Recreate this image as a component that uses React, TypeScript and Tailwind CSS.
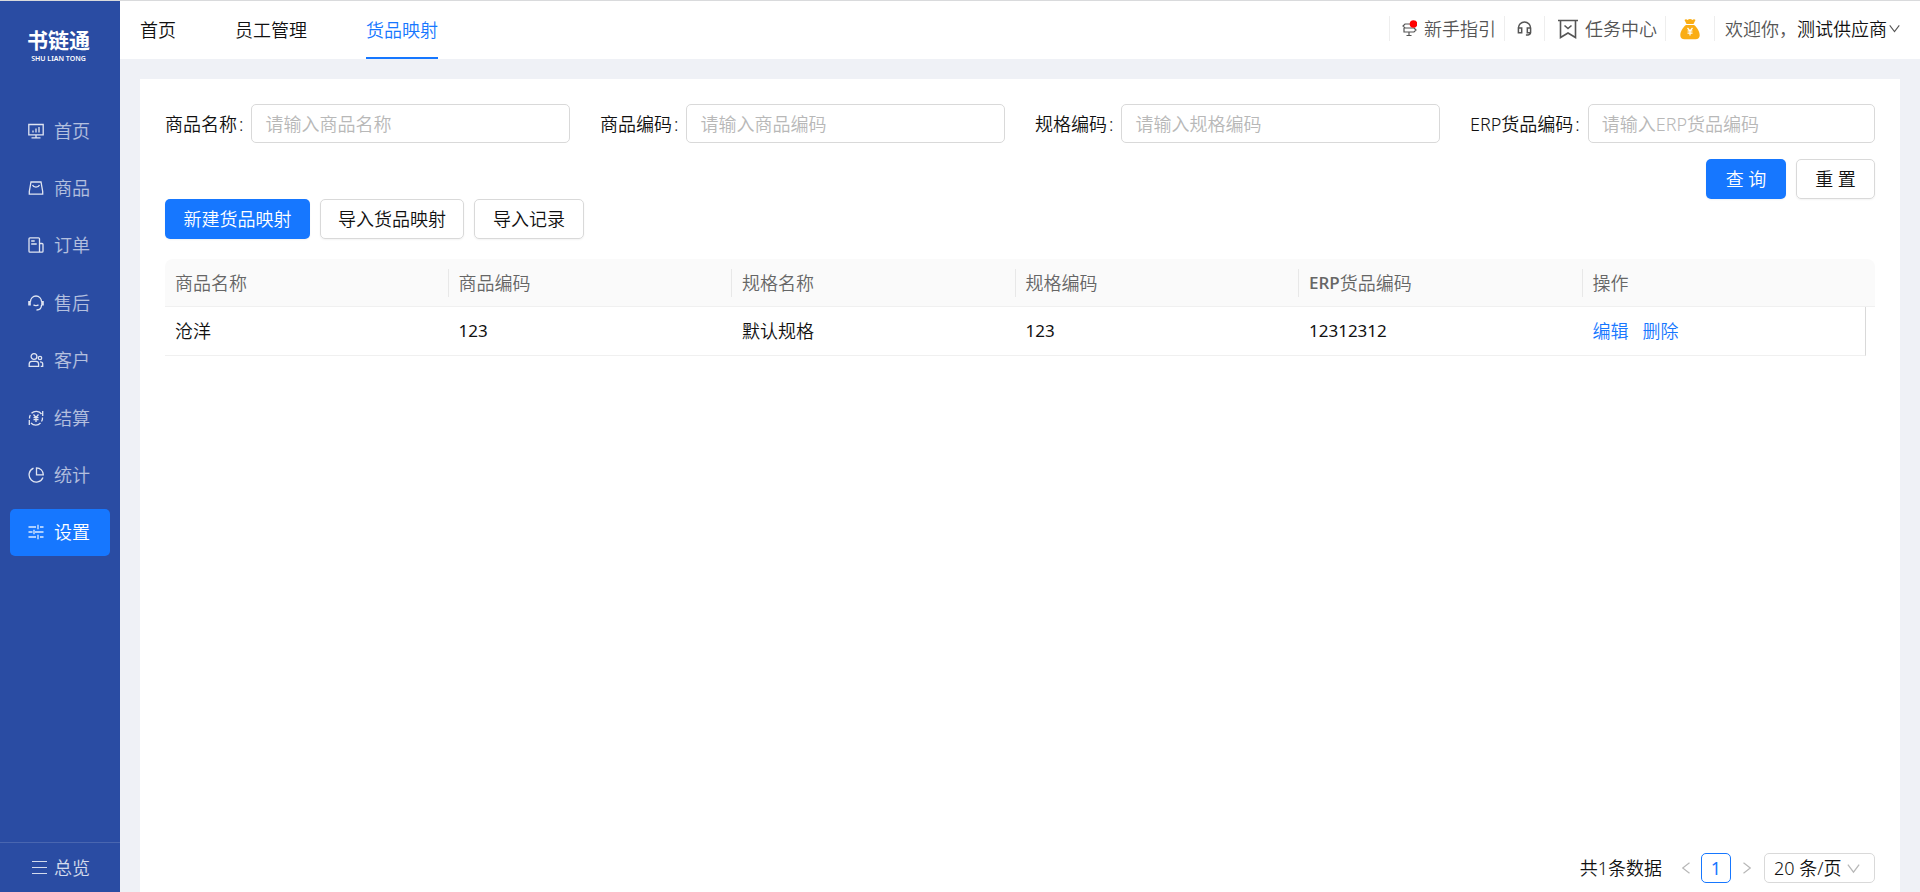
import { useState, FormEvent, ReactNode } from 'react';

interface Field {
  id: string;
  label: string;
}

interface Mapping {
  name: string;
  code: string;
  specName: string;
  specCode: string;
  erpCode: string;
}

const fields: Field[] = [
  { id: 'name', label: '商品名称' },
  { id: 'code', label: '商品编码' },
  { id: 'specCode', label: '规格编码' },
  { id: 'erpCode', label: 'ERP货品编码' },
];

const columns = ['商品名称', '商品编码', '规格名称', '规格编码', 'ERP货品编码', '操作'];

const rows: Mapping[] = [
  { name: '沧洋', code: '123', specName: '默认规格', specCode: '123', erpCode: '12312312' },
];

const tabs = ['首页', '员工管理', '货品映射'];

const menu: { label: string; icon: ReactNode }[] = [
  {
    label: '首页',
    icon: (
      <>
        <path d="M.8 1.500h14.400v10.300H.8zM8 12v2.500M3.500 14.800h9" />
        <path d="M5 9.500V7.500M8 9.500V5.500M11 9.500V4" />
      </>
    ),
  },
  {
    label: '商品',
    icon: <path d="M3 2h10l1.700 9.500v2.700H1.300v-2.700zM4.500 5c1 2.700 6 2.700 7 0" />,
  },
  {
    label: '订单',
    icon: (
      <>
        <path d="M2 .8h8.500q1 0 1 1v13.400H2q-1 0-1-1V1.800q0-1 1-1zM11.500 6.500H14q1 0 1 1v6.700q0 1-1 1h-2.500" />
        <path d="M3.200 4h3.500M3.200 7h5.500" />
      </>
    ),
  },
  {
    label: '售后',
    icon: (
      <>
        <path d="M2.500 6.500a5.500 5.500 0 0 1 11 0M13.500 10c0 3-2 5-5 5M5.500 9.800c1 1 4 1 5 0" />
        <path d="M1.500 6v4.500M14.500 6v4.500" strokeWidth="2.600" />
      </>
    ),
  },
  {
    label: '客户',
    icon: (
      <>
        <circle cx="6" cy="4.500" r="2.900" />
        <path d="M1.200 14.300V12c0-2 1-2.700 2.700-2.700h4c1.700 0 2.700.7 2.700 2.700v2.300z" />
        <circle cx="12" cy="6" r="1.700" />
        <path d="M12 9.800c2 0 2.700.6 2.700 2v2.500h-2" />
      </>
    ),
  },
  {
    label: '结算',
    icon: (
      <>
        <path d="M3.500 3.300a6.500 6.500 0 0 1 10 .7M14.500 7.500a6.500 6.500 0 0 1-1 4M12.500 13a6.500 6.500 0 0 1-9.500 0M1.500 8.500a6.500 6.500 0 0 1 .8-3.500" />
        <path d="M14.700 1v5M1.300 15v-5M5.500 4.500 8 7.500l2.500-3M5.500 7.700h5M5.500 9.700h5M8 7.500V12" />
      </>
    ),
  },
  {
    label: '统计',
    icon: (
      <>
        <path d="M5.500 1.200A7.200 7.200 0 1 0 15 10.500" />
        <path d="M8.500.8v7H15.300A7 7 0 0 0 8.500.8z" />
      </>
    ),
  },
  {
    label: '设置',
    icon: (
      <path d="M.5 3H8M12 3h3.500M10 .8v4.400M.5 8h4M7 8h8.500M6 5.800v4.400M.5 13H8M12 13h3.500M10 10.800v4.400" />
    ),
  },
];

const Icon = ({ children }: { children: ReactNode }) => (
  <svg viewBox="0 0 16 16" className="size-4 shrink-0 text-white/85" fill="none" stroke="currentColor" strokeWidth="1.300">
    {children}
  </svg>
);

const Chevron = ({ className }: { className: string }) => (
  <svg viewBox="0 0 12 12" className={className} fill="none" stroke="currentColor" strokeWidth="1.200">
    <path d="M.8 2.500 6 9.300l5.200-6.800" />
  </svg>
);

const Sidebar = () => (
  <aside className="flex w-[120px] shrink-0 flex-col bg-[#2a4ca3] text-white">
    <div className="flex flex-col items-center pt-[26px] pr-[3px]">
      <span className="text-[21px] leading-[27px] font-bold">书链通</span>
      <span className="text-[7px] leading-[9px] font-semibold">SHU LIAN TONG</span>
    </div>
    <nav className="mt-11 flex h-[449px] flex-col justify-between px-2.5">
      {menu.map((item) => (
        <a
          key={item.label}
          href="#"
          className={`flex h-[47px] items-center gap-2.5 rounded-[5px] pl-[18px] ${
            item.label === '设置' ? 'bg-[#1677ff] text-white' : 'text-white/65'
          }`}
        >
          <Icon>{item.icon}</Icon>
          {item.label}
        </a>
      ))}
    </nav>
    <button type="button" className="mt-auto flex h-[50px] items-center gap-[7px] border-t border-white/15 pl-8 text-white/80">
      <svg viewBox="0 0 15 15" className="size-[15px]" stroke="currentColor" strokeWidth="1.200">
        <path d="M0 1.500h15M0 7.500h15M0 13.500h15" />
      </svg>
      总览
    </button>
  </aside>
);

const Header = () => (
  <header className="flex h-[58px] shrink-0 justify-between bg-white px-5">
    <nav className="flex gap-[59px]">
      {tabs.map((tab) => (
        <a
          key={tab}
          href="#"
          className={`flex items-center border-b-2 pt-0.5 ${
            tab === '货品映射' ? 'border-[#1677ff] text-[#1677ff]' : 'border-transparent'
          }`}
        >
          {tab}
        </a>
      ))}
    </nav>
    <div className="mt-[15px] flex h-[25px] items-center text-[#555]">
      <a href="#" className="flex h-full items-center gap-[7px] border-l border-[#eee] pr-2 pl-3">
        <svg viewBox="0 0 15 18" className="h-[18px] w-[15px]" fill="none" stroke="currentColor" strokeWidth="1.200">
          <path d="M13 8H3L1 6l2-2h7M2 8v4h10l2-2-2-2M7 12v3.500M4.500 15.500h5" />
          <circle cx="11.500" cy="4" r="3.800" fill="#f00" stroke="none" />
        </svg>
        新手指引
      </a>
      <button type="button" aria-label="客服" className="flex h-full items-center border-l border-[#eee] px-3">
        <svg viewBox="0 0 16 16" className="size-[15px]" fill="none" stroke="currentColor" strokeWidth="1.600">
          <path d="M1.500 8V7.500a6.500 6.500 0 0 1 13 0v4.700c0 2-1.500 2.800-5 2.800M1.500 7.500H5v5H1.500zM14.500 7.500H11v5h3.500" />
        </svg>
      </button>
      <a href="#" className="flex h-full items-center gap-[7px] border-l border-[#eee] pr-2 pl-[13px]">
        <svg viewBox="0 0 20 20" className="size-5" fill="none" stroke="currentColor" strokeWidth="1.600">
          <path d="M0 1.500h20M2.500 1.500v17L10 14l7.500 4.500v-17M6.500 6.500 10 9.500l3.500-3" />
        </svg>
        任务中心
      </a>
      <button type="button" aria-label="钱包" className="flex h-full items-center border-l border-[#eee] px-3.5">
        <svg viewBox="0 0 20 22" className="h-[22px] w-5" fill="#faad14">
          <path d="M4.500 2q1.500-1.500 3 0Q10 0 12.500 2q1.500-1.500 3 0L13.500 6h-7z" />
          <path d="M6 7h8c3 2 5.700 6.500 5.700 10.300 0 2.700-1.700 4-4.200 4h-11c-2.500 0-4.200-1.300-4.200-4C.3 13.500 3 9 6 7z" />
          <path d="m7.500 10 2.500 3 2.500-3M7.500 13h5M7.500 15.200h5M10 13v4.500" fill="none" stroke="#fff" strokeWidth="1.200" />
        </svg>
      </button>
      <button type="button" className="flex h-full items-center border-l border-[#eee] pl-2.5">
        欢迎你，<span className="text-[#111]">测试供应商</span>
        <Chevron className="ml-0.5 size-[11px]" />
      </button>
    </div>
  </header>
);

const SearchForm = () => {
  const [values, setValues] = useState<Record<string, string>>({});

  const handleSearch = (e: FormEvent) => {
    e.preventDefault();
  };

  return (
    <form onSubmit={handleSearch}>
      <div className="grid grid-cols-4 gap-x-[30px]">
        {fields.map((field) => (
          <div key={field.id} className="flex items-center gap-2">
            <label htmlFor={field.id} className="flex shrink-0 gap-0.5">
              {field.label}<span>:</span>
            </label>
            <input
              id={field.id}
              type="text"
              value={values[field.id] ?? ''}
              onChange={(e) => setValues({ ...values, [field.id]: e.target.value })}
              placeholder={`请输入${field.label}`}
              className="h-[39px] w-full min-w-0 rounded-[5px] border border-[#d9d9d9] px-[13px] outline-none placeholder:text-[#b8b8b8] focus:border-[#1677ff]"
            />
          </div>
        ))}
      </div>
      <div className="mt-4 flex justify-end gap-2.5">
        <button type="submit" className="h-10 w-20 rounded-[5px] bg-[#1677ff] text-white shadow-xs">
          查 询
        </button>
        <button
          type="button"
          onClick={() => setValues({})}
          className="h-10 w-[79px] rounded-[5px] border border-[#d9d9d9] shadow-xs"
        >
          重 置
        </button>
      </div>
    </form>
  );
};

const MappingTable = () => (
  <table className="mt-5 w-full table-fixed border-separate border-spacing-0 text-left">
    <colgroup>
      {columns.map((column) => (
        <col key={column} />
      ))}
      <col className="w-[9px]" />
    </colgroup>
    <thead className="text-[#666]">
      <tr>
        {columns.map((column, i) => (
          <th
            key={column}
            className="h-12 border-b border-[#f0f0f0] bg-[#fafafa] p-0 font-[350] first:rounded-tl-lg"
          >
            <div className={`flex h-7 items-center pl-2.5 ${i < columns.length - 1 ? 'border-r border-[#e8e8e8]' : ''}`}>
              {column.startsWith('ERP') ? (
                <>
                  <span className="font-['Open_Sans',sans-serif] text-[17px] font-semibold">ERP</span>
                  {column.slice(3)}
                </>
              ) : (
                column
              )}
            </div>
          </th>
        ))}
        <th className="rounded-tr-lg border-b border-[#f0f0f0] bg-[#fafafa] p-0" />
      </tr>
    </thead>
    <tbody>
      {rows.map((row) => (
        <tr key={row.erpCode}>
          <td className="h-[49px] border-b border-[#f0f0f0] p-0 pl-2.5">{row.name}</td>
          <td className="border-b border-[#f0f0f0] p-0 pl-2.5 text-[17px] font-normal">{row.code}</td>
          <td className="border-b border-[#f0f0f0] p-0 pl-2.5">{row.specName}</td>
          <td className="border-b border-[#f0f0f0] p-0 pl-2.5 text-[17px] font-normal">{row.specCode}</td>
          <td className="border-b border-[#f0f0f0] p-0 pl-2.5 text-[17px] font-normal">{row.erpCode}</td>
          <td className="border-r border-b border-[#f0f0f0] border-r-[#d9d9d9] p-0 pl-2.5">
            <div className="flex gap-3.5 text-[#1677ff]">
              <a href="#">编辑</a>
              <a href="#">删除</a>
            </div>
          </td>
          <td />
        </tr>
      ))}
    </tbody>
  </table>
);

const Pagination = () => (
  <div className="mt-auto flex items-center justify-end">
    <span>共1条数据</span>
    <button type="button" aria-label="上一页" className="ml-[18px] text-[#b8b8b8]">
      <Chevron className="size-3 rotate-90" />
    </button>
    <button type="button" className="ml-[9px] size-[30px] rounded-[5px] border border-[#1677ff] font-normal text-[#1677ff]">
      1
    </button>
    <button type="button" aria-label="下一页" className="ml-2.5 text-[#b8b8b8]">
      <Chevron className="size-3 -rotate-90" />
    </button>
    <div className="relative ml-[11px]">
      <select aria-label="每页条数" className="h-[30px] w-[111px] appearance-none rounded-[5px] border border-[#d9d9d9] pl-[9px] leading-7">
        <option>20 条/页</option>
        <option>50 条/页</option>
      </select>
      <Chevron className="pointer-events-none absolute top-[9px] right-[15px] size-[13px] text-[#b8b8b8]" />
    </div>
  </div>
);

const App = () => {
  return (
    <div className="flex h-screen border-t border-[#d9dadc] bg-[#eff1f6] font-['Noto_Sans','Noto_Sans_CJK_SC',sans-serif] text-[18px] leading-7 font-[350] text-[#111]">
      <Sidebar />
      <div className="flex min-w-0 flex-1 flex-col">
        <Header />
        <main className="mx-5 mt-5 flex flex-1 flex-col bg-white px-[25px] pt-[25px] pb-[9px]">
          <SearchForm />
          <div className="flex gap-2.5">
            <button type="button" className="h-10 w-[145px] rounded-[5px] bg-[#1677ff] text-white shadow-xs">
              新建货品映射
            </button>
            <button type="button" className="h-10 rounded-[5px] border border-[#d9d9d9] px-[17px] shadow-xs">
              导入货品映射
            </button>
            <button type="button" className="h-10 rounded-[5px] border border-[#d9d9d9] px-[18px] shadow-xs">
              导入记录
            </button>
          </div>
          <MappingTable />
          <Pagination />
        </main>
      </div>
    </div>
  );
};

export default App;
